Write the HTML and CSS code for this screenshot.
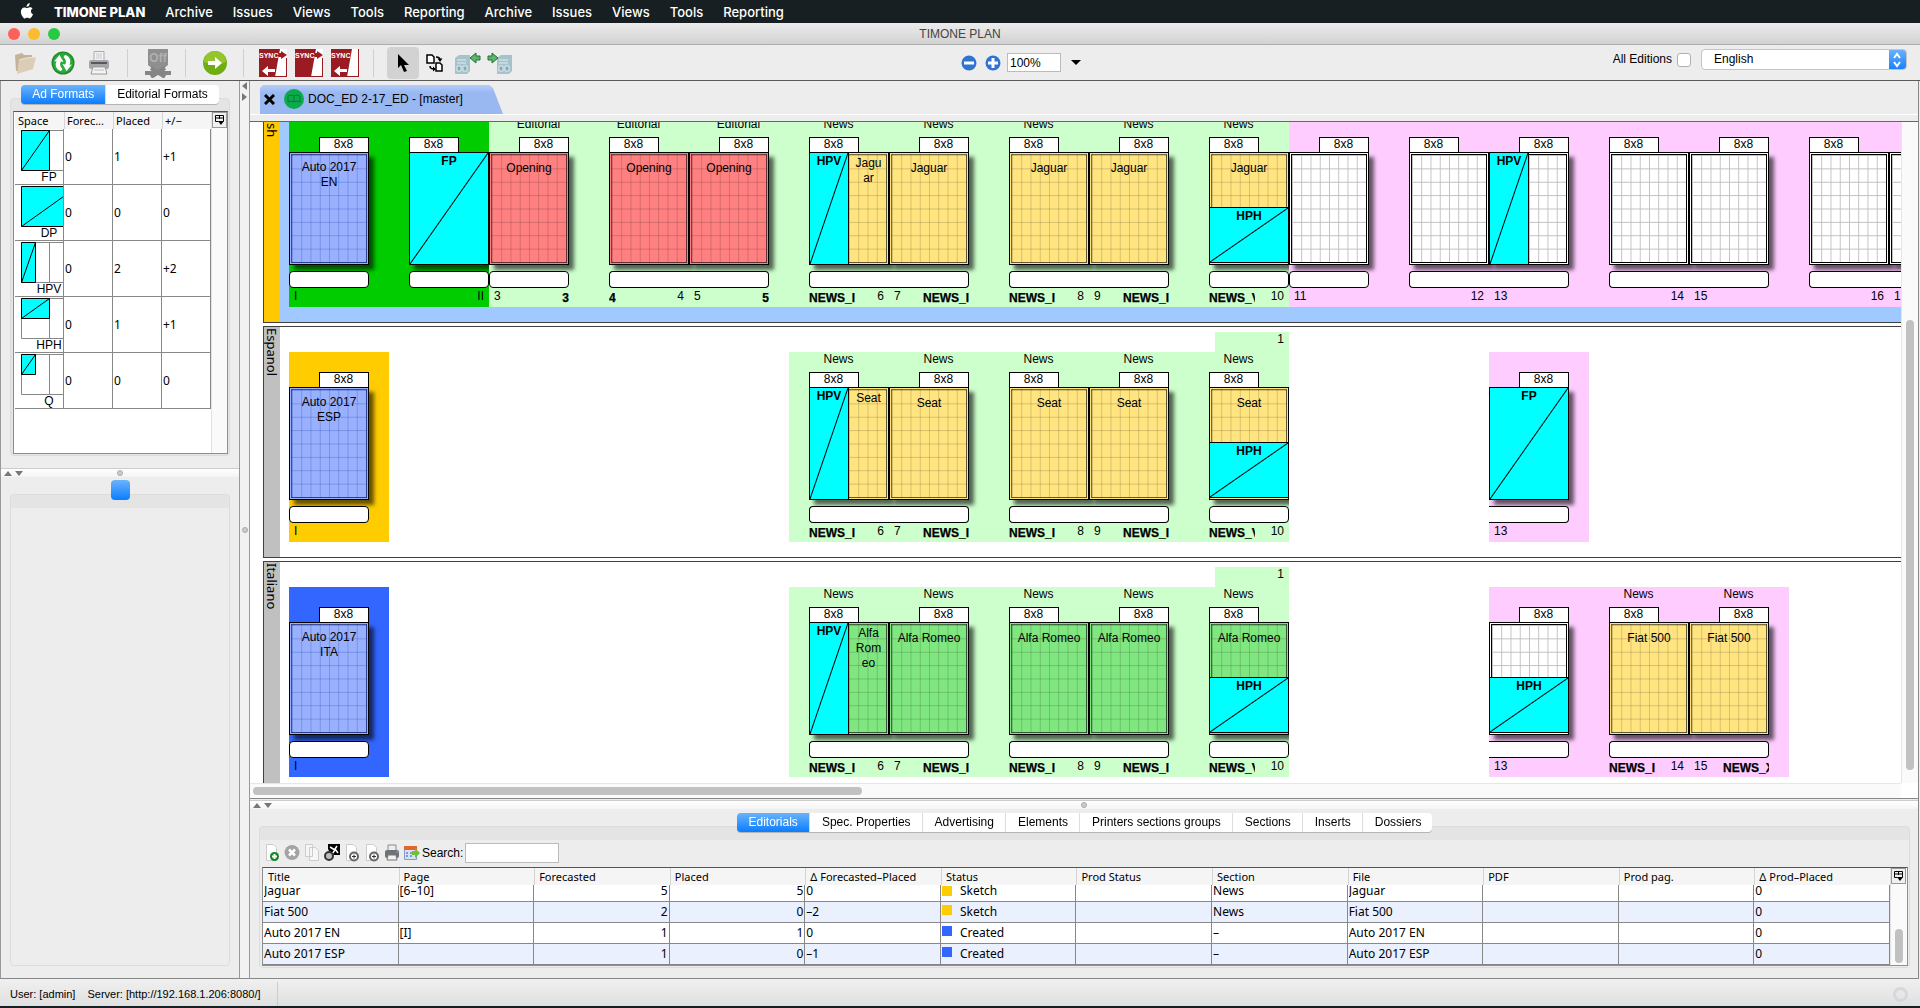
FILE: index.html
```html
<!DOCTYPE html>
<html lang="en">
<head>
<meta charset="utf-8">
<title>TIMONE PLAN</title>
<link rel="stylesheet" href="styles.css">
</head>
<body>
<nav class="menubar">
  <svg class="apple" viewBox="0 0 14 17" aria-hidden="true"><path d="M9.9 0c.1 1.1-.3 2.100-.9 2.800-.6.8-1.600 1.300-2.500 1.200-.1-1 .3-2 .9-2.700C8 .6 9 .1 9.900 0zM12.900 5.800c-1.100.7-1.700 1.600-1.700 2.900 0 1.500.8 2.700 2.200 3.200-.3 1-.8 1.900-1.400 2.800-.6.9-1.200 1.700-2.200 1.700s-1.300-.6-2.500-.6-1.600.6-2.500.6c-1 0-1.700-.9-2.400-1.900C1.100 12.700.5 10.900.5 9.200c0-2.800 1.800-4.500 3.700-4.500 1.200 0 2 .7 2.900.7.8 0 1.800-.8 3.200-.8 1 0 2 .4 2.600 1.200z" fill="#fff"/></svg>
  <a href="#" class="app">TIMONE PLAN</a>
  <a href="#">Archive</a><a href="#">Issues</a><a href="#">Views</a><a href="#">Tools</a><a href="#">Reporting</a>
  <a href="#">Archive</a><a href="#">Issues</a><a href="#">Views</a><a href="#">Tools</a><a href="#">Reporting</a>
</nav>
<header class="titlebar">
  <button class="light red" aria-label="Close"></button><button class="light amber" aria-label="Minimise"></button><button class="light lime" aria-label="Zoom"></button>
  <h1>TIMONE PLAN</h1>
</header>
<div class="toolbar">
  <div class="group g1">
    <button class="tool" aria-label="Open"><svg width="24" height="24" viewBox="0 0 24 24"><path d="M1 4l7-2 2 2h8v4L6 20H2z" fill="#c3b39c"/><path d="M5 9l7-2 10-1-3 12-16 5z" fill="#dccdb6"/><path d="M5 9l7-2 10-1" stroke="#eee4d4" fill="none"/></svg></button>
    <button class="tool" aria-label="Refresh"><svg width="24" height="24" viewBox="0 0 24 24"><circle cx="12" cy="12" r="11.500" fill="#1f8c2c"/><circle cx="12" cy="12" r="10" fill="#2eaa3b"/><path d="M10 20c-4.500-1-6.500-5.500-4.500-10L3 10.500 8.500 4l4 7-2.800-.4C8.500 13 9 16 11.500 18zM14 4c4.500 1 6.500 5.500 4.500 10l2.500-.5L15.500 20l-4-7 2.800.4C15.500 11 15 8 12.500 6z" fill="#fff"/></svg></button>
    <button class="tool" aria-label="Print"><svg width="22" height="24" viewBox="0 0 22 24"><path d="M6 .5h10v9H6z" fill="#f2f2f2" stroke="#aaa"/><path d="M8 3h6M8 5h6M8 7h6" stroke="#ccc"/><rect x="1" y="9" width="20" height="9" rx="2" fill="#a4a6aa"/><path d="M3 12h16" stroke="#55585c" stroke-width="2"/><path d="M5 16h12l2 7H3z" fill="#f4f4f4" stroke="#9a9a9a"/><path d="M6 19h10" stroke="#bbb"/></svg></button>
  </div>
  <div class="group g2"><button class="tool" aria-label="Off"><svg width="28" height="30" viewBox="0 0 28 30"><path d="M4 1h20v16l-7 6h-6l-7-6z" fill="#8f8f8f"/><path d="M1 25h26M7 20l14 9M21 20L7 29" stroke="#858585" stroke-width="4"/><text x="14" y="14" text-anchor="middle" class="off">Off</text></svg></button></div>
  <div class="group g3"><button class="tool" aria-label="Go"><svg width="24" height="24" viewBox="0 0 24 24"><circle cx="12" cy="12" r="12" fill="#6fae10"/><path d="M1 11a11 11 0 0 1 22 0c-7 3-15 3-22 0z" fill="#94c62c"/><path d="M5 10h7V6l7 6-7 6v-4H5z" fill="#fff"/></svg></button></div>
  <div class="group g4">
    <button class="tool" aria-label="Sync both"><svg width="28" height="28" viewBox="0 0 28 28"><path d="M0 0h28v28H0z" fill="#fff"/><path d="M0 0h21l-5 28H0z" fill="#9a1c22"/><path d="M18 4h4V2l6 4-6 4V8h-4z" fill="#9a1c22"/><text x="0" y="9" class="sync">SYNC</text><path d="M16 20v3H9v4l-6-5 6-5v3z" fill="#fff"/><path d="M0 27.500h28M27.500 9v19" stroke="#9a1c22"/></svg></button>
    <button class="tool" aria-label="Sync out"><svg width="28" height="28" viewBox="0 0 28 28"><path d="M0 0h28v28H0z" fill="#fff"/><path d="M0 0h21l-5 28H0z" fill="#9a1c22"/><path d="M18 4h4V2l6 4-6 4V8h-4z" fill="#9a1c22"/><text x="0" y="9" class="sync">SYNC</text><path d="M0 27.500h28M27.500 9v19" stroke="#9a1c22"/></svg></button>
    <button class="tool" aria-label="Sync in"><svg width="28" height="28" viewBox="0 0 28 28"><path d="M0 0h28v28H0z" fill="#fff"/><path d="M0 0h21l-5 28H0z" fill="#9a1c22"/><text x="0" y="9" class="sync">SYNC</text><path d="M16 20v3H9v4l-6-5 6-5v3z" fill="#fff"/><path d="M0 27.500h28M27.500 0v28" stroke="#9a1c22"/></svg></button>
  </div>
  <div class="group g5">
    <button class="tool active" aria-label="Select"><svg width="12" height="18" viewBox="0 0 12 18"><path d="M1 0v14l3-3 3 7 3-1-3-6h5z" fill="#000"/></svg></button>
    <button class="tool swap" aria-label="Swap pages"><svg width="18" height="18" viewBox="0 0 18 18"><g fill="#fff" stroke="#000" stroke-width="1.500"><path d="M1 1h5l2 2v6H1zM10 9h4l2 2v6h-6z"/><path d="M10 3q4 0 4 3M8 15q-4 0-4-3" fill="none"/></g><path d="M11.500 4.500h5L14 8zM7 12.500v5l3-2.500z"/></svg></button>
    <button class="tool" aria-label="Page in"><svg width="26" height="22" viewBox="0 0 26 22"><path d="M0 6l4-3h11v16l-3 3H0z" fill="#a5c3cc"/><path d="M2 8h9M2 11h9M2 14h4v5H2zM8 14h4v5H8z" stroke="#e2ecef" fill="#86a9b5"/><path d="M25 4h-4V1l-6 5 6 5V8h4z" fill="#5cb56c" stroke="#256e35"/></svg></button>
    <button class="tool" aria-label="Page out"><svg width="26" height="22" viewBox="0 0 26 22"><path d="M10 6l4-3h11v16l-3 3H10z" fill="#a5c3cc"/><path d="M12 8h9M12 11h9M12 14h4v5h-4zM18 14h4v5h-4z" stroke="#e2ecef" fill="#86a9b5"/><path d="M1 4h4V1l6 5-6 5V8H1z" fill="#5cb56c" stroke="#256e35"/></svg></button>
  </div>
  <div class="zoom">
    <button class="round" aria-label="Zoom out"><svg width="16" height="16"><circle cx="8" cy="8" r="7.500" fill="#2f74d0"/><path d="M3 8h10" stroke="#fff" stroke-width="3"/></svg></button>
    <button class="round" aria-label="Zoom in"><svg width="16" height="16"><circle cx="8" cy="8" r="7.500" fill="#2f74d0"/><path d="M3 8h10M8 3v10" stroke="#fff" stroke-width="3"/></svg></button>
    <input type="text" value="100%" aria-label="Zoom level">
    <button class="drop" aria-label="Zoom levels"></button>
  </div>
  <div class="editions">
    <label for="all">All Editions</label><input type="checkbox" id="all">
    <span class="selectbox"><select aria-label="Edition"><option>English</option></select><svg width="17" height="20" aria-hidden="true"><path d="M5 8l3-4 3 4M5 12l3 4 3-4" stroke="#fff" stroke-width="2" fill="none"/></svg></span>
  </div>
</div>
<main>
  <aside>
    <section class="well formats">
      <div class="tabs"><button class="on">Ad Formats</button><button>Editorial Formats</button></div>
      <div class="tablebox">
        <table class="ads">
          <thead><tr><th>Space</th><th>Forec...</th><th>Placed</th><th>+/−</th></tr></thead>
          <tbody>
            <tr><td><svg><path d="M.5.5h56v40H.5z"/><path class="c" d="M.5.5h28v40H.5zl28-40"/><path class="d" d="M.5 40.500l28-40"/></svg><span>FP</span></td><td>0</td><td>1</td><td>+1</td></tr>
            <tr><td><svg><path class="c" d="M.5.5h56v40H.5z"/><path class="d" d="M.5 40.500l56-40"/></svg><span>DP</span></td><td>0</td><td>0</td><td>0</td></tr>
            <tr><td><svg><path d="M.5.5h56v40H.5zM28.500.5v40"/><path class="c" d="M.5.5h14v40H.5z"/><path class="d" d="M.5 40.500l14-40"/></svg><span>HPV</span></td><td>0</td><td>2</td><td>+2</td></tr>
            <tr><td><svg><path d="M.5.5h56v40H.5zM28.500.5v40"/><path class="c" d="M.5.5h28v20H.5z"/><path class="d" d="M.5 20.500l28-20"/></svg><span>HPH</span></td><td>0</td><td>1</td><td>+1</td></tr>
            <tr><td><svg><path d="M.5.5h56v40H.5zM28.500.5v40"/><path class="c" d="M.5.5h14v20H.5z"/><path class="d" d="M.5 20.500l14-20"/></svg><span>Q</span></td><td>0</td><td>0</td><td>0</td></tr>
          </tbody>
        </table>
        <div class="gutter"><button class="cols" aria-label="Columns"><svg width="9" height="10"><path d="M.5.5h8v6M.5.5v6h3M0 3h9M4.500 1v3" stroke="#000" fill="none"/><path d="M3 6h6l-3 4z"/></svg></button></div>
      </div>
    </section>
    <div class="hsplit"><i class="up"></i><i class="down"></i><i class="dot"></i></div>
    <section class="well empty"><button class="knob" aria-label="Panel"></button></section>
  </aside>
  <div class="vsplit"><i class="lt"></i><i class="rt"></i><i class="dot"></i></div>
  <div class="work">
    <div class="doctabs">
      <div class="doctab"><button aria-label="Close document"><svg width="11" height="11"><path d="M1 1l9 9M10 1l-9 9" stroke="#000" stroke-width="3"/></svg></button>
        <svg width="20" height="20" aria-hidden="true"><circle cx="10" cy="10" r="10" fill="#0bab4b"/><path d="M10 7q-3-2-6 0v6q3-2 6 0 3-2 6 0V7q-3-2-6 0v6" stroke="#067a35" fill="none"/></svg>
        <span>DOC_ED 2-17_ED - [master]</span></div>
    </div>
    <div class="canvas">
      <div class="view">
        <div class="lanes">
          <section class="lane sel"><h2>English</h2>
            <div class="sec green"><div class="row">
              <div class="spread"><article class="page r blue"><p class="rub"></p><span class="tag">8x8</span><div class="sheet"><p>Auto 2017 EN</p></div><div class="box"></div><footer><span>I</span></footer></article></div>
              <div class="spread"><article class="page l white"><p class="rub"></p><span class="tag">8x8</span><div class="sheet"><b class="ad fp">FP</b></div><div class="box"></div><footer><b></b><span>II</span></footer></article></div>
            </div></div>
            <div class="sec pale"><div class="row">
              <div class="spread"><article class="page r pink"><p class="rub">Editorial</p><span class="tag">8x8</span><div class="sheet"><p>Opening</p></div><div class="box"></div><footer><span>3</span><b>3</b></footer></article></div>
              <div class="spread two"><article class="page l pink"><p class="rub">Editorial</p><span class="tag">8x8</span><div class="sheet"><p>Opening</p></div><div class="box"></div><footer><b>4</b><span>4</span></footer></article><article class="page r pink"><p class="rub">Editorial</p><span class="tag">8x8</span><div class="sheet"><p>Opening</p></div><div class="box"></div><footer><span>5</span><b>5</b></footer></article></div>
              <div class="spread two"><article class="page l yellow"><p class="rub">News</p><span class="tag">8x8</span><div class="sheet"><b class="ad hpv">HPV</b><p class="half">Jagu<br>ar</p></div><div class="box"></div><footer><b>NEWS_I</b><span>6</span></footer></article><article class="page r yellow"><p class="rub">News</p><span class="tag">8x8</span><div class="sheet"><p>Jaguar</p></div><div class="box"></div><footer><span>7</span><b>NEWS_I</b></footer></article></div>
              <div class="spread two"><article class="page l yellow"><p class="rub">News</p><span class="tag">8x8</span><div class="sheet"><p>Jaguar</p></div><div class="box"></div><footer><b>NEWS_I</b><span>8</span></footer></article><article class="page r yellow"><p class="rub">News</p><span class="tag">8x8</span><div class="sheet"><p>Jaguar</p></div><div class="box"></div><footer><span>9</span><b>NEWS_I</b></footer></article></div>
              <div class="spread"><article class="page l yellow"><p class="rub">News</p><span class="tag">8x8</span><div class="sheet"><p>Jaguar</p><b class="ad hph">HPH</b></div><div class="box"></div><footer><b>NEWS_V</b><span>10</span></footer></article></div>
            </div></div>
            <div class="sec rose"><div class="row">
              <div class="spread"><article class="page r white"><p class="rub"></p><span class="tag">8x8</span><div class="sheet"></div><div class="box"></div><footer><span>11</span></footer></article></div>
              <div class="spread two"><article class="page l white"><p class="rub"></p><span class="tag">8x8</span><div class="sheet"></div><div class="box"></div><footer><b></b><span>12</span></footer></article><article class="page r white"><p class="rub"></p><span class="tag">8x8</span><div class="sheet"><b class="ad hpv">HPV</b></div><div class="box"></div><footer><span>13</span></footer></article></div>
              <div class="spread two"><article class="page l white"><p class="rub"></p><span class="tag">8x8</span><div class="sheet"></div><div class="box"></div><footer><b></b><span>14</span></footer></article><article class="page r white"><p class="rub"></p><span class="tag">8x8</span><div class="sheet"></div><div class="box"></div><footer><span>15</span></footer></article></div>
              <div class="spread two"><article class="page l white"><p class="rub"></p><span class="tag">8x8</span><div class="sheet"></div><div class="box"></div><footer><b></b><span>16</span></footer></article><article class="page r white"><p class="rub"></p><span class="tag">8x8</span><div class="sheet"></div><div class="box"></div><footer><span>17</span></footer></article></div>
            </div></div>
          </section>
          <section class="lane"><h2>Espanol</h2>
            <div class="sec gold after"><div class="row">
              <div class="spread"><article class="page r blue"><p class="rub"></p><span class="tag">8x8</span><div class="sheet"><p>Auto 2017 ESP</p></div><div class="box"></div><footer><span>I</span></footer></article></div>
            </div></div>
            <div class="sec pale before skip4"><span class="count">1</span><div class="row">
              <div class="spread two"><article class="page l yellow"><p class="rub">News</p><span class="tag">8x8</span><div class="sheet"><b class="ad hpv">HPV</b><p class="half">Seat</p></div><div class="box"></div><footer><b>NEWS_I</b><span>6</span></footer></article><article class="page r yellow"><p class="rub">News</p><span class="tag">8x8</span><div class="sheet"><p>Seat</p></div><div class="box"></div><footer><span>7</span><b>NEWS_I</b></footer></article></div>
              <div class="spread two"><article class="page l yellow"><p class="rub">News</p><span class="tag">8x8</span><div class="sheet"><p>Seat</p></div><div class="box"></div><footer><b>NEWS_I</b><span>8</span></footer></article><article class="page r yellow"><p class="rub">News</p><span class="tag">8x8</span><div class="sheet"><p>Seat</p></div><div class="box"></div><footer><span>9</span><b>NEWS_I</b></footer></article></div>
              <div class="spread"><article class="page l yellow"><p class="rub">News</p><span class="tag">8x8</span><div class="sheet"><p>Seat</p><b class="ad hph">HPH</b></div><div class="box"></div><footer><b>NEWS_V</b><span>10</span></footer></article></div>
            </div></div>
            <div class="sec rose after skip2"><div class="row">
              <div class="spread cut"><article class="page r white"><p class="rub"></p><span class="tag">8x8</span><div class="sheet"><b class="ad fp">FP</b></div><div class="box"></div><footer><span>13</span></footer></article></div>
            </div></div>
          </section>
          <section class="lane"><h2>Italiano</h2>
            <div class="sec navy after"><div class="row">
              <div class="spread"><article class="page r blue"><p class="rub"></p><span class="tag">8x8</span><div class="sheet"><p>Auto 2017 ITA</p></div><div class="box"></div><footer><span>I</span></footer></article></div>
            </div></div>
            <div class="sec pale before skip4"><span class="count">1</span><div class="row">
              <div class="spread two"><article class="page l lime"><p class="rub">News</p><span class="tag">8x8</span><div class="sheet"><b class="ad hpv">HPV</b><p class="half">Alfa<br>Rom<br>eo</p></div><div class="box"></div><footer><b>NEWS_I</b><span>6</span></footer></article><article class="page r lime"><p class="rub">News</p><span class="tag">8x8</span><div class="sheet"><p>Alfa Romeo</p></div><div class="box"></div><footer><span>7</span><b>NEWS_I</b></footer></article></div>
              <div class="spread two"><article class="page l lime"><p class="rub">News</p><span class="tag">8x8</span><div class="sheet"><p>Alfa Romeo</p></div><div class="box"></div><footer><b>NEWS_I</b><span>8</span></footer></article><article class="page r lime"><p class="rub">News</p><span class="tag">8x8</span><div class="sheet"><p>Alfa Romeo</p></div><div class="box"></div><footer><span>9</span><b>NEWS_I</b></footer></article></div>
              <div class="spread"><article class="page l lime"><p class="rub">News</p><span class="tag">8x8</span><div class="sheet"><p>Alfa Romeo</p><b class="ad hph">HPH</b></div><div class="box"></div><footer><b>NEWS_V</b><span>10</span></footer></article></div>
            </div></div>
            <div class="sec rose after skip2"><div class="row">
              <div class="spread cut"><article class="page r white"><p class="rub"></p><span class="tag">8x8</span><div class="sheet"><b class="ad hph">HPH</b></div><div class="box"></div><footer><span>13</span></footer></article></div>
              <div class="spread two"><article class="page l yellow"><p class="rub">News</p><span class="tag">8x8</span><div class="sheet"><p>Fiat 500</p></div><div class="box"></div><footer><b>NEWS_I</b><span>14</span></footer></article><article class="page r yellow"><p class="rub">News</p><span class="tag">8x8</span><div class="sheet"><p>Fiat 500</p></div><div class="box"></div><footer><span>15</span><b>NEWS_X</b></footer></article></div>
            </div></div>
          </section>
        </div>
      </div>
      <div class="vbar"><i></i></div>
      <div class="hbar"><i></i></div>
    </div>
    <div class="hsplit"><i class="up"></i><i class="down"></i><i class="dot"></i></div>
    <section class="well lists">
      <div class="tabs"><button class="on">Editorials</button><button>Spec. Properties</button><button>Advertising</button><button>Elements</button><button>Printers sections groups</button><button>Sections</button><button>Inserts</button><button>Dossiers</button></div>
      <div class="minibar">
        <button aria-label="New"><svg width="16" height="18"><path d="M2.500.5h7l3 3v13h-10z" fill="#fff" stroke="#ccc"/><circle cx="10.500" cy="12.500" r="4.500" fill="#128a22"/><path d="M8 12.500h5M10.500 10v5" stroke="#fff" stroke-width="2"/></svg></button>
        <button aria-label="Delete"><svg width="16" height="18"><circle cx="8" cy="8.500" r="7.500" fill="#a3a3a3"/><path d="M5 5.500l6 6M11 5.500l-6 6" stroke="#fff" stroke-width="2.500"/></svg></button>
        <button aria-label="Copy"><svg width="16" height="18"><path d="M1.500.5h7v12h-7zM5.500 3.500h6l3 3v10h-9z" fill="#f6f6f6" stroke="#ccc"/></svg></button>
        <button aria-label="Find"><svg width="16" height="18"><path d="M4 0h12v11H7L4 5z" fill="#000"/><path d="M6 3l5 3-3 4M13 2l-2 3 3 4" stroke="#fff" stroke-width="1.500" fill="none"/><circle cx="5" cy="12" r="4" fill="#bbb" stroke="#333" stroke-width="2"/></svg></button>
        <button aria-label="Import"><svg width="16" height="18"><path d="M2.500.5h7l3 3v13h-10z" fill="#fff" stroke="#ccc"/><circle cx="10" cy="12.500" r="4" fill="#fff" stroke="#666" stroke-width="2"/><path d="M8 12.500h4M10 10.500v4" stroke="#333"/></svg></button>
        <button aria-label="Export"><svg width="16" height="18"><path d="M2.500.5h7l3 3v13h-10z" fill="#fff" stroke="#ccc"/><circle cx="10" cy="12.500" r="4" fill="#fff" stroke="#666" stroke-width="2"/><path d="M8 12.500h4M10 10.500v4" stroke="#333"/></svg></button>
        <button aria-label="Print list"><svg width="16" height="18"><path d="M4 1h8v7H4z" fill="#eee" stroke="#888"/><rect x="1" y="6" width="14" height="8" rx="2" fill="#6f7378"/><path d="M4 11h8l1 5H3z" fill="#f2f2f2" stroke="#777"/><path d="M12 8h2" stroke="#7db4e8"/></svg></button>
        <button aria-label="Calendar"><svg width="16" height="18"><path d="M.5 2.500h12v13H.5z" fill="#d6e2f4" stroke="#7d9bd0"/><path d="M0 2h13v4H0z" fill="#e0662b"/><path d="M2 9h2M6 9h2M2 12h2M6 12h2" stroke="#7d9bd0" stroke-width="2"/><path d="M8 7h3V4l5 5-5 5v-3H8z" fill="#6cc232"/></svg></button>
        <label for="search">Search:</label><input type="text" id="search">
      </div>
      <div class="tablebox">
        <table class="eds">
          <thead><tr><th>Title</th><th>Page</th><th>Forecasted</th><th>Placed</th><th>Δ Forecasted–Placed</th><th>Status</th><th>Prod Status</th><th>Section</th><th>File</th><th>PDF</th><th>Prod pag.</th><th>Δ Prod–Placed</th></tr></thead>
          <tbody>
            <tr class="part"><td><div>Jaguar</div></td><td><div>[6–10]</div></td><td class="n"><div>5</div></td><td class="n"><div>5</div></td><td><div>0</div></td><td><div class="st sk">Sketch</div></td><td></td><td><div>News</div></td><td><div>Jaguar</div></td><td></td><td></td><td><div>0</div></td></tr>
            <tr><td>Fiat 500</td><td></td><td class="n">2</td><td class="n">0</td><td>–2</td><td><div class="st sk">Sketch</div></td><td></td><td>News</td><td>Fiat 500</td><td></td><td></td><td>0</td></tr>
            <tr><td>Auto 2017 EN</td><td>[I]</td><td class="n">1</td><td class="n">1</td><td>0</td><td><div class="st cr">Created</div></td><td></td><td>–</td><td>Auto 2017 EN</td><td></td><td></td><td>0</td></tr>
            <tr><td>Auto 2017 ESP</td><td></td><td class="n">1</td><td class="n">0</td><td>–1</td><td><div class="st cr">Created</div></td><td></td><td>–</td><td>Auto 2017 ESP</td><td></td><td></td><td>0</td></tr>
          </tbody>
        </table>
        <div class="gutter"><button class="cols" aria-label="Columns"><svg width="9" height="10"><path d="M.5.5h8v6M.5.5v6h3M0 3h9M4.500 1v3" stroke="#000" fill="none"/><path d="M3 6h6l-3 4z"/></svg></button><i></i></div>
      </div>
    </section>
  </div>
</main>
<footer class="status"><span>User: [admin]</span><span class="srv">Server: [http://192.168.1.206:8080/]</span><i></i></footer>
</body>
</html>
```
FILE: styles.css
```css
* { box-sizing: border-box; }
body { margin: 0; height: 100vh; display: flex; flex-direction: column; background: #ededed; color: #000; font: 12px/15px "Liberation Sans", Arial, sans-serif; overflow: hidden; }
h1, h2, p { margin: 0; font: inherit; }
button { margin: 0; padding: 0; border: 0; background: none; font: inherit; color: inherit; }
input, select { font: inherit; margin: 0; }
svg { display: block; flex: none; }

.menubar { flex: none; height: 23px; padding-left: 20px; display: flex; align-items: center; gap: 20px; background: #171f22; font: 500 13px/22px Inter, sans-serif; }
.menubar a { color: #fff; text-decoration: none; }
.menubar .app { font-weight: 800; }
.apple { width: 14px; height: 16px; margin-bottom: 2px; }
.titlebar { flex: none; height: 22px; display: flex; align-items: center; gap: 8px; padding-left: 8px; position: relative; background: linear-gradient(#ececec, #d2d2d2); border-bottom: 1px solid #adadad; border-radius: 5px 5px 0 0; }
.titlebar h1 { position: absolute; left: 0; right: 0; padding-top: 2px; text-align: center; line-height: 17px; color: #444; pointer-events: none; }
.light { width: 12px; height: 12px; border-radius: 6px; }
.light.red { background: #fc605b; }
.light.amber { background: #fdbc2e; }
.light.lime { background: #27ca40; }

.toolbar { flex: none; height: 36px; display: flex; align-items: center; position: relative; border-bottom: 1px solid #5a5a5a; }
.group { height: 28px; display: flex; align-items: center; gap: 8px; border-right: 1px solid #d0d0d0; }
.g1 { width: 128px; padding-left: 14px; gap: 13px; }
.g2 { width: 58px; padding-left: 16px; }
.g3 { width: 58px; padding-left: 17px; }
.g4 { width: 130px; padding-left: 15px; }
.g5 { padding-left: 13px; border: 0; gap: 6px; }
.tool { display: flex; align-items: center; justify-content: center; }
.active { width: 32px; height: 32px; background: #d2d2d2; border-radius: 4px; }
.swap { margin: 0 5px 0 1px; }
.off { font: bold 12px "Liberation Sans", sans-serif; fill: #b0b0b0; }
.sync { font: bold 7px "Liberation Sans", sans-serif; fill: #fff; }
.zoom { display: flex; align-items: center; gap: 8px; position: absolute; left: 50%; margin-left: 1px; }
.zoom input { width: 54px; height: 19px; margin-left: -2px; padding: 0 2px; border: 1px solid #bbb; font-size: 12px; }
.drop { border: 5px solid transparent; border-top-color: #000; border-bottom: 0; margin-left: 2px; }
.editions { display: flex; align-items: center; margin: 0 13px 6px auto; }
.editions [type=checkbox] { appearance: none; width: 14px; height: 14px; margin: 0 10px 0 5px; background: #fff; border: 1px solid #b0b0b0; border-radius: 3px; }
.selectbox { display: flex; width: 206px; height: 21px; border: 1px solid #c4c4c4; border-radius: 4px; overflow: hidden; background: #fff; }
.selectbox select { flex: 1; appearance: none; border: 0; background: none; padding: 0 12px; }
.selectbox svg { background: linear-gradient(#6bb0fb, #1480fd); }

main { flex: 1; min-height: 0; display: flex; }
aside { flex: none; width: 239px; display: flex; flex-direction: column; border-left: 1px solid #999; }
.well { position: relative; margin: 17px 9px 0; border: 1px solid #dcdcdc; border-radius: 4px; background: #e4e4e4; }
.tabs { position: absolute; top: -14px; left: 0; right: 0; display: flex; justify-content: center; filter: drop-shadow(0 1px 0 #b4b4b4); }
.tabs button { height: 19px; padding: 0 11px; background: #fff; border-left: 1px solid #ddd; white-space: nowrap; }
.lists .tabs button { padding-left: 12px; }
.tabs button:first-child { border: 0; border-radius: 4px 0 0 4px; }
.tabs button:last-child { border-radius: 0 4px 4px 0; }
.tabs .on { color: #fff; background: linear-gradient(#6bb3fa, #0a7dff); }
.tablebox { display: flex; background: #fff; border: 1px solid #8e8e8e; border-top-color: #555; }
.formats .tablebox { height: 343px; margin: 12px 1px 1px 2px; }
table { border-collapse: separate; border-spacing: 0; table-layout: fixed; font: 12px/15px "Noto Sans", sans-serif; }
th { height: 17px; padding: 0 4px; text-align: left; font-weight: 400; font-size: 11px; line-height: 16px; background: #f5f5f5; white-space: nowrap; overflow: hidden; border-left: 1px solid #d4d4d4; }
th:first-child { border-color: transparent; }
td { border-right: 1px solid #888; border-bottom: 1px solid #888; }
.ads { width: 196px; flex: none; align-self: flex-start; margin-left: 1px; }
.ads th { padding: 0 2px; }
.ads td { height: 56px; padding: 0 1px; }
.ads td:first-child { padding: 1px 0 0 6px; }
.ads td svg { width: 42px; height: 41px; fill: none; stroke: #888; overflow: hidden; }
.ads .c { fill: #0ff; stroke: #000; }
.ads .d { stroke: #000; }
.ads td span { display: block; height: 13px; width: 56px; line-height: 13px; text-align: center; font-family: "Liberation Sans", sans-serif; }
.gutter { flex: 1; background: #fafafa; border-left: 1px solid #e2e2e2; position: relative; }
.cols { width: 15px; height: 16px; display: flex; align-items: center; justify-content: center; border: 1px solid #999; background: #f0f0f0; }
.hsplit { flex: none; height: 9px; display: flex; align-items: center; gap: 3px; padding-left: 3px; background: linear-gradient(#fff, #f4f4f4); border-top: 1px solid #ccc; position: relative; }
aside .hsplit { margin-top: 12px; }
.hsplit .dot { position: absolute; left: 50%; margin-left: -3px; }
.dot { width: 6px; height: 6px; border-radius: 3px; background: #ccc; border: 1px solid #aaa; }
.up, .down { border: 4px solid transparent; border-top: 0; border-bottom: 5px solid #777; }
.down { border-top: 5px solid #777; border-bottom: 0; }
.empty { flex: 1; margin-bottom: 12px; background: linear-gradient(#e4e4e4 13px, #ededed 13px); }
.knob { position: absolute; left: 50%; margin-left: -9px; top: -15px; width: 19px; height: 20px; border-radius: 4px; background: linear-gradient(#6bb3fa, #0a7dff); }
.vsplit { flex: none; width: 11px; border: 1px solid #999; border-top: 0; border-bottom: 0; display: flex; flex-direction: column; align-items: center; gap: 3px; padding-top: 1px; position: relative; background: #f2f2f2; }
.lt, .rt { border: 4px solid transparent; border-left: 0; border-right: 5px solid #777; }
.rt { border-left: 5px solid #777; border-right: 0; }
.vsplit .dot { position: absolute; top: 50%; margin-top: -3px; }

.work { flex: 1; min-width: 0; display: flex; flex-direction: column; margin-right: 1px; border-right: 1px solid #888; border-bottom: 1px solid #888; }
aside, .vsplit { border-bottom: 1px solid #888; }
.doctabs { flex: none; height: 34px; padding: 4px 0 0 10px; border-bottom: 1px solid #fff; }
.doctab { width: 243px; height: 29px; display: flex; align-items: center; gap: 9px; padding: 0 0 1px 4px; background: linear-gradient(#b4ccfa, #99b8f2 8px); clip-path: polygon(0 3px, 3px 0, 200px 0, 229px 0, 233px 3px, 100% 100%, 0 100%); }
.doctab span { margin-left: -5px; font-size: 12px; }
.canvas { flex: 1; min-height: 0; margin-top: 6px; border-top: 1px solid #666; border-bottom: 1px solid #888; display: grid; grid-template: minmax(0, 1fr) 15px / minmax(0, 1fr) 17px; background: #fff; }
.view { overflow: hidden; padding-left: 13px; }
.lanes { margin-top: -31px; display: flex; flex-direction: column; gap: 3px; }
.lane { height: 232px; display: flex; align-items: flex-start; border: 1px solid #404040; border-right: 0; }
.lane h2 { flex: none; width: 16px; height: 230px; margin-right: 9px; padding-top: 1px; background: #c0c0c0; writing-mode: vertical-rl; font: 13px/16px "Noto Sans", sans-serif; }
.sel { background: #a0caff; }
.sel h2 { background: #ffc800; }
.sec { flex: none; position: relative; margin-top: 25px; height: 190px; }
.row { display: flex; gap: 40px; overflow: hidden; height: 190px; }
.green { background: #0c0; }
.pale { background: #cfc; }
.rose { background: #fcf; }
.gold { background: #fc0; }
.navy { background: #36f; }
.after { padding-right: 20px; }
.before .row { padding-left: 20px; }
.after .row { margin-right: -20px; padding-right: 20px; }
.skip4 { margin-left: 400px; }
.skip2 { margin-left: 200px; }
.count { position: absolute; right: 0; top: -20px; width: 74px; height: 20px; padding: 0 5px; line-height: 14px; text-align: right; background: #cfc; }
.spread { display: flex; }
.page { width: 80px; display: flex; flex-direction: column; }
.rub { height: 20px; line-height: 14px; width: 59px; text-align: center; }
.r .rub { align-self: flex-end; width: 61px; }
.tag { width: 50px; height: 15px; line-height: 13px; padding-right: 1px; text-align: center; background: #fff; border: 1px solid #000; border-bottom: 0; }
.r .tag { align-self: flex-end; }
.sheet { --line: #0000002a; --frame: #0008; position: relative; height: 113px; border: 1px solid #000; box-shadow: 5px 5px 4px #0009; }
.sheet::before { content: ""; position: absolute; inset: 1px; border: 1px solid var(--frame); background: linear-gradient(90deg, var(--line) 1px, transparent 1px) 0 0 / 12.5% 100%, linear-gradient(var(--line) 1px, transparent 1px) 0 0 / 100% 12.5%; background-origin: padding-box; }
.blue .sheet { background: #99b0ff; }
.pink .sheet { background: #ff8080; }
.yellow .sheet { background: #ffe480; }
.lime .sheet { background: #80e680; }
.white .sheet { --line: #c0c0c0; --frame: #000; background: #fff; }
.blue .sheet { --line: #00208838; --frame: #001060a0; }
.sheet p { position: relative; padding: 8px 6px 0; text-align: center; line-height: 15px; }
.blue .sheet p { padding-top: 7px; }
.sheet .half { padding: 3px 0 0; margin-left: 39px; }
.ad { position: absolute; z-index: 1; text-align: center; line-height: 16px; background: linear-gradient(to bottom right, transparent calc(50% - 1px), #000 50%, transparent calc(50% + 1px)) #0ff; }
.fp { inset: 0; }
.hpv { left: 0; top: 0; bottom: 0; width: 39px; border-right: 1px solid #000; }
.hph { left: 0; right: 0; top: 54px; bottom: 1px; border-top: 1px solid #000; border-bottom: 1px solid #000; }
.box { height: 17px; margin-top: 6px; background: #fff; border: 1px solid #000; border-radius: 4px; position: relative; }
.two .l .box { border-right: 0; border-radius: 4px 0 0 4px; }
.two .r .box { border-left: 0; border-radius: 0 4px 4px 0; }
.cut .box { border-left: 0; border-radius: 0 4px 4px 0; }
.page footer { display: flex; justify-content: space-between; line-height: 16px; }
.page footer span { padding: 0 5px; }
.page footer b { padding-top: 3px; line-height: 15px; max-width: 46px; overflow: hidden; -webkit-text-stroke: thin #000; }
.vbar { background: #fafafa; border-left: 1px solid #e6e6e6; position: relative; }
.vbar i { position: absolute; left: 4px; width: 8px; top: 30%; bottom: 2%; border-radius: 4px; background: #c1c1c1; }
.hbar { background: #fafafa; border-top: 1px solid #e6e6e6; padding: 3px; }
.hbar i { display: block; width: 37%; height: 8px; border-radius: 4px; background: #c1c1c1; }

.work > .hsplit { margin-top: 1px; }
.lists { flex: none; margin: 17px 8px 10px 9px; padding-bottom: 1px; background: linear-gradient(#e4e4e4 13px, #ededed 13px); }
.minibar { height: 24px; margin: 14px 0 2px 4px; display: flex; align-items: center; gap: 4px; }
.minibar label { margin-left: -2px; }
.minibar input { width: 94px; height: 20px; border: 1px solid #bbb; margin-left: -2px; }
.lists .tablebox { margin: 0 1px 0 2px; }
.eds { flex: 1 1 0; width: 100%; min-width: 0; }
.eds td { height: 21px; padding: 0 1px; line-height: 20px; white-space: nowrap; }
.eds .part td { height: 17px; }
.part td > div { height: 16px; display: flex; align-items: flex-end; overflow: hidden; }
.part .n div { justify-content: flex-end; }
.eds tr:nth-child(even) td { background: #eaf0fe; }
.n { text-align: right; }
.lists .gutter { flex: none; width: 17px; }
.lists .gutter i { position: absolute; left: 4px; bottom: 2px; width: 8px; height: 34px; border-radius: 4px; background: #c1c1c1; }
.st { display: flex; align-items: center; }
.st::before { content: ""; width: 10px; height: 10px; margin: 0 8px 5px 0; background: #fc0; }
.st.cr::before { background: #36f; }

.status { flex: none; height: 29px; display: flex; align-items: center; padding: 3px 12px 0 10px; font-size: 11px; background: linear-gradient(#f0f0f0, #e0e0e0); border-bottom: 2px solid #171f22; }
.srv { margin-left: 12px; padding-right: 16px; line-height: 24px; border-right: 1px solid #ccc; }
.status i { width: 15px; height: 15px; margin-left: auto; border: 3px solid #d5d8dc; border-radius: 8px; }
```
